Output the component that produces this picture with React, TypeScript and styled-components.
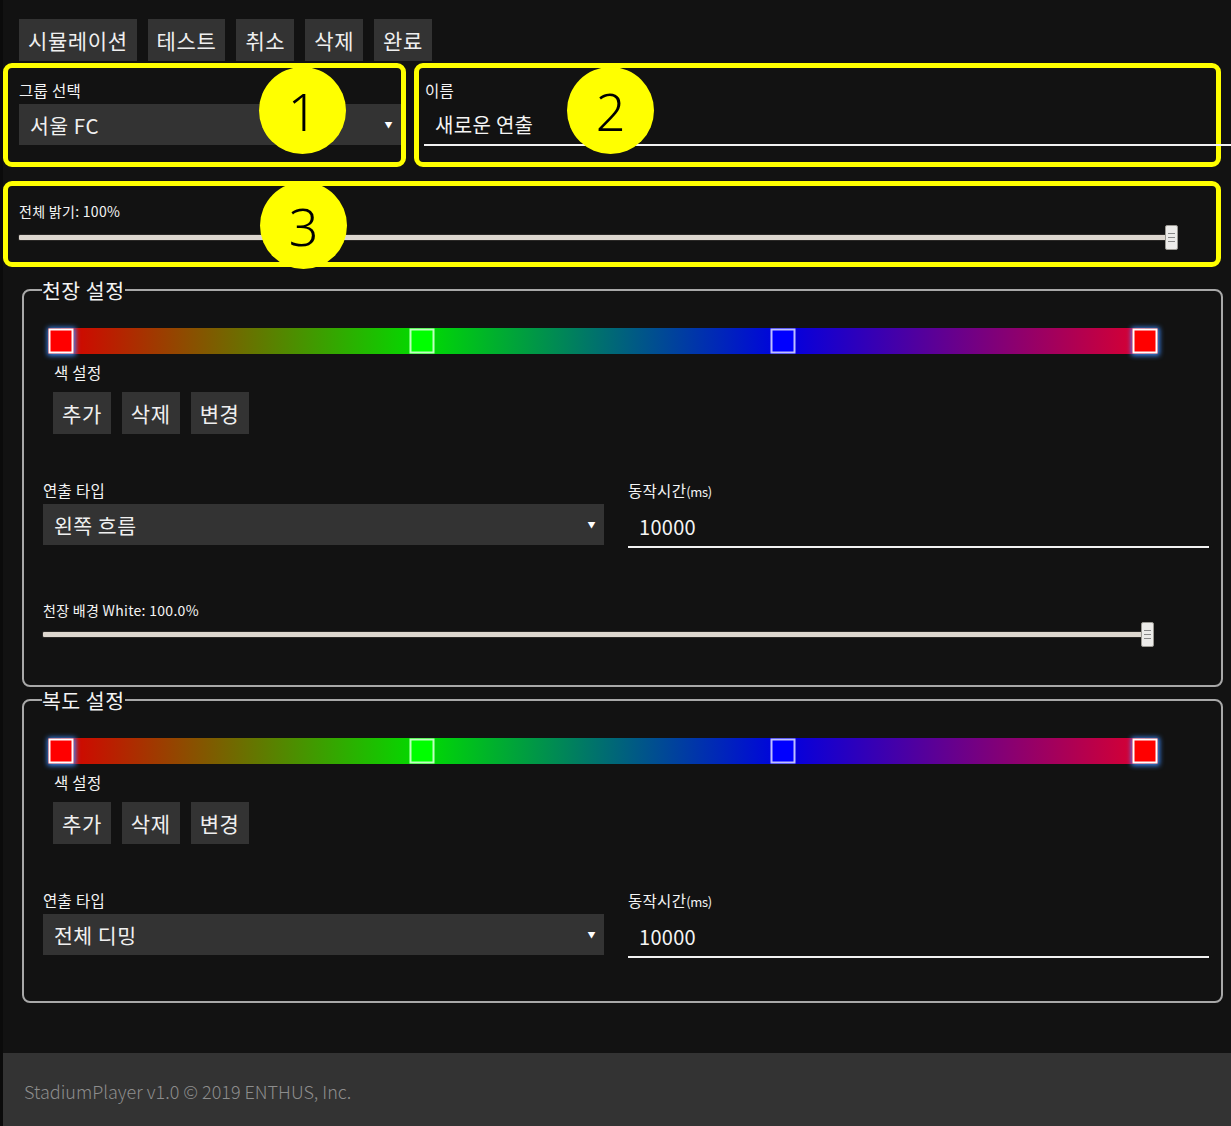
import React from "react";
import styled, { createGlobalStyle, css } from "styled-components";

const GlobalStyle = createGlobalStyle`
  html, body { margin: 0; padding: 0; background: #0b0b0b; }
  body { font-family: "Noto Sans CJK KR", "Noto Sans", sans-serif; color: #f2f2f2; }
  * { box-sizing: border-box; }
`;

const Page = styled.div`
  margin-left: 3px;
  background: #121212;
  min-height: 1126px;
  display: flex;
  flex-direction: column;
`;

const Main = styled.div`
  padding-top: 19px;
  display: flex;
  flex-direction: column;
`;

const Toolbar = styled.div`
  display: flex;
  gap: 11px;
  padding-left: 16px;
`;

const Button = styled.button`
  height: 42px;
  padding: 0 9px;
  border: none;
  background: #333333;
  color: #efefef;
  font-family: inherit;
  font-size: 21px;
  letter-spacing: 0.6px;
  line-height: 42px;
  cursor: pointer;
`;

const TopRow = styled.div`
  display: flex;
  gap: 8px;
  margin-top: 2px;
  margin-right: 10px;
`;

const Callout = styled.div<{ $width?: string; $height: number; $pl: number; $pr?: number; $pt: number }>`
  position: relative;
  border: 5px solid #ffff00;
  border-radius: 9px;
  height: ${(p) => p.$height}px;
  padding: ${(p) => p.$pt}px ${(p) => p.$pr ?? 0}px 0 ${(p) => p.$pl}px;
  ${(p) =>
    p.$width
      ? css`
          width: ${p.$width};
          flex: none;
        `
      : css`
          flex: 1;
        `}
`;

const WideCallout = styled(Callout)`
  flex: none;
  margin-top: 14px;
  margin-right: 10px;
`;

const Badge = styled.div<{ $left: number; $top: number }>`
  position: absolute;
  left: ${(p) => p.$left}px;
  top: ${(p) => p.$top}px;
  width: 87px;
  height: 87px;
  border-radius: 50%;
  background: #ffff00;
  color: #000;
  font-family: "Noto Sans", "Open Sans", sans-serif;
  font-size: 52px;
  font-weight: 300;
  display: flex;
  align-items: center;
  justify-content: center;
  z-index: 5;
  line-height: 1;
`;

const Label = styled.div<{ $size?: number; $ml?: number }>`
  font-size: ${(p) => p.$size ?? 15.5}px;
  line-height: 22px;
  color: #f4f4f4;
  margin-left: ${(p) => p.$ml ?? 0}px;
  white-space: nowrap;
  letter-spacing: 0.3px;
`;

const Small = styled.span`
  font-size: 13px;
  letter-spacing: -0.3px;
`;

const Select = styled.div`
  margin-top: 3px;
  height: 41px;
  background: #333333;
  display: flex;
  align-items: center;
  justify-content: space-between;
  padding: 0 8px 0 11px;
  font-size: 20.5px;
  letter-spacing: 0.5px;
  color: #f0f0f0;
`;

const Caret = styled.span`
  font-size: 8px;
  color: #fff;
`;

const TextField = styled.div<{ $extend?: number }>`
  margin-top: 3px;
  height: 42px;
  border-bottom: 2px solid #f2f2f2;
  display: flex;
  align-items: center;
  padding-left: 11px;
  font-size: 20px;
  letter-spacing: 0.3px;
  color: #f4f4f4;
  margin-right: ${(p) => -(p.$extend ?? 0)}px;
`;

const Slider = styled.div<{ $mr: number; $mt: number }>`
  display: flex;
  align-items: center;
  height: 25px;
  margin-top: ${(p) => p.$mt}px;
  margin-right: ${(p) => p.$mr}px;
`;

const Track = styled.div`
  flex: 1;
  height: 5px;
  background: #ddd7cf;
  border-radius: 1px;
  box-shadow: 0 0 0 1px #2a2826;
`;

const Thumb = styled.div`
  width: 13px;
  height: 25px;
  margin-left: -5px;
  background: #ecebe9;
  border: 1px solid #9a9892;
  border-radius: 2px;
  display: flex;
  align-items: center;
  justify-content: center;
  &::before {
    content: "";
    width: 7px;
    height: 7px;
    border-top: 1px solid #888;
    border-bottom: 1px solid #888;
    background: linear-gradient(#888, #888) center / 100% 1px no-repeat;
  }
`;

const Fieldset = styled.fieldset<{ $mt: number; $pb: number }>`
  margin: ${(p) => p.$mt}px 8px 0 19px;
  border: 2px solid #a8a8a8;
  border-radius: 8px;
  padding: 0 12px ${(p) => p.$pb}px 19px;
  min-width: 0;
`;

const Legend = styled.legend`
  padding: 0;
  margin-left: -1px;
  font-size: 20.5px;
  letter-spacing: 0.5px;
  line-height: 24px;
  color: #f4f4f4;
`;

const ColorBar = styled.div<{ $mt: number }>`
  position: relative;
  height: 26px;
  margin: ${(p) => p.$mt}px 64px 0 18px;
  background: linear-gradient(
    to right,
    #d80000 0%,
    #00dc00 33.3%,
    #0000e0 66.6%,
    #da0030 100%
  );
`;

const Stop = styled.div<{ $color: string; $selected?: boolean }>`
  position: absolute;
  top: 50%;
  width: 25px;
  height: 25px;
  transform: translate(-50%, -50%);
  background: ${(p) => p.$color};
  border: 2px solid ${(p) => (p.$selected ? "#ffffff" : "rgba(255,255,255,0.75)")};
  box-shadow: ${(p) => (p.$selected ? "0 0 5px 2px #3b8cff" : "none")};
`;

const ButtonRow = styled.div`
  display: flex;
  gap: 11px;
  margin: 9px 0 0 10px;
`;

const FormGrid = styled.div`
  display: grid;
  grid-template-columns: 561px 1fr;
  column-gap: 24px;
  margin-top: 45px;
`;

const Field = styled.div`
  display: flex;
  flex-direction: column;
`;

const SliderBlock = styled.div`
  margin-top: 51px;
`;

const Footer = styled.footer`
  margin-top: 50px;
  background: #333333;
  height: 76px;
  display: flex;
  align-items: center;
  padding-left: 21px;
  font-family: "Noto Sans CJK KR", "Noto Sans", sans-serif;
  font-weight: 300;
  font-size: 18px;
  color: #8d8d8d;
`;

const stops = [
  { pct: 0, color: "#ff0000", selected: true },
  { pct: 33.3, color: "#00ff00" },
  { pct: 66.6, color: "#0000ff" },
  { pct: 100, color: "#ff0000", selected: true },
];

function ZoneSettings({
  title,
  effect,
  mt,
  pb,
  barMt,
  background,
}: {
  title: string;
  effect: string;
  mt: number;
  pb: number;
  barMt: number;
  background?: string;
}) {
  return (
    <Fieldset $mt={mt} $pb={pb}>
      <Legend>{title}</Legend>
      <ColorBar $mt={barMt}>
        {stops.map((s, i) => (
          <Stop key={i} $color={s.color} $selected={s.selected} style={{ left: `${s.pct}%` }} />
        ))}
      </ColorBar>
      <Label $ml={11} style={{ marginTop: 7 }}>
        색 설정
      </Label>
      <ButtonRow>
        <Button>추가</Button>
        <Button>삭제</Button>
        <Button>변경</Button>
      </ButtonRow>
      <FormGrid>
        <Field>
          <Label>연출 타입</Label>
          <Select>
            {effect}
            <Caret>▼</Caret>
          </Select>
        </Field>
        <Field>
          <Label>
            동작시간<Small>(ms)</Small>
          </Label>
          <TextField>10000</TextField>
        </Field>
      </FormGrid>
      {background && (
        <SliderBlock>
          <Label $size={14}>{background}</Label>
          <Slider $mr={55} $mt={1}>
            <Track />
            <Thumb />
          </Slider>
        </SliderBlock>
      )}
    </Fieldset>
  );
}

export default function App() {
  return (
    <>
      <GlobalStyle />
      <Page>
        <Main>
          <Toolbar>
            <Button>시뮬레이션</Button>
            <Button>테스트</Button>
            <Button>취소</Button>
            <Button>삭제</Button>
            <Button>완료</Button>
          </Toolbar>
          <TopRow>
            <Callout $width="403px" $height={104} $pl={11} $pr={0} $pt={11}>
              <Label>그룹 선택</Label>
              <Select>
                서울 FC
                <Caret>▼</Caret>
              </Select>
              <Badge $left={251} $top={-1}>1</Badge>
            </Callout>
            <Callout $height={104} $pl={5} $pt={11}>
              <Label $ml={1}>이름</Label>
              <TextField $extend={15}>새로운 연출</TextField>
              <Badge $left={148} $top={-1}>2</Badge>
            </Callout>
          </TopRow>
          <WideCallout $height={86} $pl={11} $pt={14}>
            <Label $size={14}>전체 밝기: 100%</Label>
            <Slider $mr={38} $mt={3}>
              <Track />
              <Thumb />
            </Slider>
            <Badge $left={252} $top={-4}>3</Badge>
          </WideCallout>
          <ZoneSettings
            title="천장 설정"
            effect="왼쪽 흐름"
            mt={11}
            pb={38}
            barMt={26}
            background="천장 배경 White: 100.0%"
          />
          <ZoneSettings title="복도 설정" effect="전체 디밍" mt={1} pb={43} barMt={26} />
        </Main>
        <Footer>StadiumPlayer v1.0 © 2019 ENTHUS, Inc.</Footer>
      </Page>
    </>
  );
}
